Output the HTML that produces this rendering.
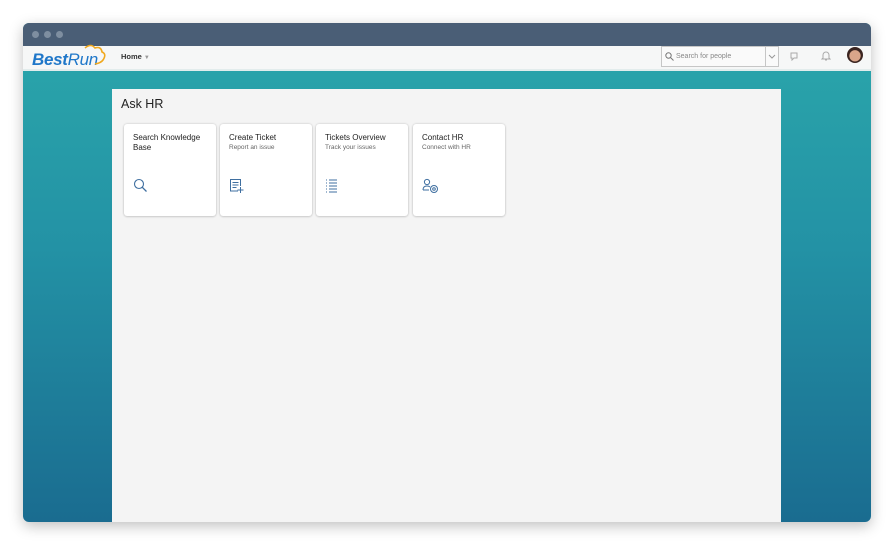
<!DOCTYPE html>
<html><head><style>
*{margin:0;padding:0;box-sizing:border-box}
body{width:894px;height:545px;background:#fff;font-family:"Liberation Sans",sans-serif;position:relative;overflow:hidden}
.win{position:absolute;left:23px;top:23px;width:848px;height:499px;border-radius:6px;overflow:hidden;box-shadow:0 4px 14px rgba(0,0,0,.25);background:linear-gradient(180deg,#2ba7ab 0%,#2392a5 45%,#1a6c90 100%)}
.tb{height:23px;background:#4a5e76;position:relative}
.dot{position:absolute;top:8px;width:7px;height:7px;border-radius:50%;background:#7e8ea0}
.hd{height:25px;background:#f6f7f7;border-bottom:2px solid #e2ecec;position:relative}
.logo{position:absolute;left:9px;top:4px;font-size:17px;font-weight:bold;font-style:italic;color:#1f77c9;letter-spacing:-.3px}
.logo span{font-weight:normal}
.home{position:absolute;left:98px;top:6px;font-size:7.5px;font-weight:bold;color:#333}
.srch{position:absolute;left:638px;top:0;width:118px;height:21px;border:1px solid #c6c6c6;background:#fafafa;font-size:7px;color:#888;padding:6px 0 0 14px}
.srch .dd{position:absolute;right:0;top:0;width:13px;height:19px;border-left:1px solid #c6c6c6}
.av{position:absolute;left:824px;top:1px;width:16px;height:16px;border-radius:50%;background:radial-gradient(circle at 50% 55%,#d9a58a 0 45%,#3a2420 50%)}
.panel{position:absolute;left:89px;top:66px;width:669px;height:440px;background:#f4f4f4}
h1{position:absolute;left:9px;top:8px;font-size:12.5px;font-weight:normal;color:#222}
.tile{position:absolute;top:35px;width:92px;height:92px;background:#fff;border-radius:3px;box-shadow:0 0 2px rgba(0,0,0,.2),0 1px 2px rgba(0,0,0,.1)}
.tile .t{position:absolute;left:9px;top:9px;font-size:8px;color:#222;line-height:9.5px;width:78px}
.tile .s{font-size:6.5px;color:#666;display:block;margin-top:0}
.tile svg{position:absolute;left:9px;top:54px}
</style></head><body>
<div class="win">
<div class="tb"><div class="dot" style="left:9px"></div><div class="dot" style="left:21px"></div><div class="dot" style="left:33px"></div></div>
<div class="hd">
<div class="logo">Best<span>Run</span></div>
<svg style="position:absolute;left:60px;top:-2px" width="24" height="22"><path d="M2 4 Q8 -1 12 4 Q18 2 19 8 Q24 10 20 16 Q18 19 12 20" fill="none" stroke="#f0a81e" stroke-width="1.6"/></svg>
<div class="home">Home <span style="color:#999;font-size:6px">▼</span></div>
<div class="srch"><svg style="position:absolute;left:3px;top:5px" width="9" height="9"><circle cx="3.5" cy="3.5" r="2.7" fill="none" stroke="#777"/><path d="M5.5 5.5L8.5 8.5" stroke="#777"/></svg>Search for people<div class="dd"><svg width="12" height="19"><path d="M3 8l3 3 3-3" fill="none" stroke="#999"/></svg></div></div>
<svg style="position:absolute;left:767px;top:5px" width="10" height="10"><path d="M1 2h6v5H4l-2 2V7H1z" fill="none" stroke="#aaa"/></svg>
<svg style="position:absolute;left:798px;top:4px" width="10" height="11"><path d="M2 8V5a3 3 0 016 0v3l1 1H1z M4 10h2" fill="none" stroke="#aaa"/></svg>
<div class="av"></div>
</div>
<div class="panel">
<h1>Ask HR</h1>
<div class="tile" style="left:12px"><div class="t">Search Knowledge Base</div>
<svg width="16" height="16"><circle cx="6" cy="6" r="4.5" fill="none" stroke="#3f6fa0" stroke-width="1.1"/><path d="M9.3 9.3L13.5 13.5" stroke="#3f6fa0" stroke-width="1.3"/></svg></div>
<div class="tile" style="left:108px"><div class="t">Create Ticket<span class="s">Report an issue</span></div>
<svg width="16" height="16"><path d="M9 13H1.5V1.5h10V8" fill="none" stroke="#3f6fa0"/><path d="M3.5 4.5h6M3.5 7h6M3.5 9.5h4M11.5 9v6M8.5 12h6" stroke="#3f6fa0"/></svg></div>
<div class="tile" style="left:204px"><div class="t">Tickets Overview<span class="s">Track your issues</span></div>
<svg width="16" height="16"><path d="M1 2h1M1 5h1M1 8h1M1 11h1M1 14h1M4 2h8M4 5h8M4 8h8M4 11h8M4 14h8" stroke="#3f6fa0"/></svg></div>
<div class="tile" style="left:301px"><div class="t">Contact HR<span class="s">Connect with HR</span></div>
<svg width="18" height="16"><circle cx="5" cy="4" r="2.6" fill="none" stroke="#3f6fa0"/><path d="M1 12q0-4 4-4q2 0 3 1M1 12h6" fill="none" stroke="#3f6fa0"/><circle cx="12" cy="11" r="3.5" fill="none" stroke="#3f6fa0"/><circle cx="12" cy="11" r="1.3" fill="none" stroke="#3f6fa0"/></svg></div>
</div>
</div>
</body></html>
